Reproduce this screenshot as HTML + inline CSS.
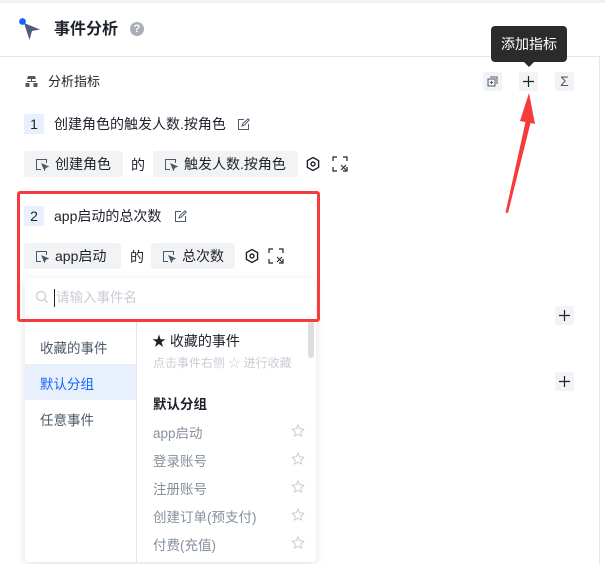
<!DOCTYPE html>
<html><head><meta charset="utf-8"><style>
*{box-sizing:border-box;margin:0;padding:0}
body{width:605px;height:564px;overflow:hidden;background:#fff;font-family:"Liberation Sans","Noto Sans CJK SC",sans-serif;color:#1d2129;position:relative}
.a{position:absolute;white-space:nowrap}
.btn{position:absolute;width:19px;height:19px;background:#f2f3f5;border-radius:2px;color:#4e5969;font-size:15px;line-height:19px;text-align:center}
.btn svg{display:block}
.badge{position:absolute;width:20px;height:20px;background:#e8f0fe;font-size:14px;line-height:20px;text-align:center;color:#1d2129}
.chip{position:absolute;height:26px;background:#f2f3f5;border-radius:3px;font-size:14px;line-height:26px;padding-left:31px;color:#1d2129}
.chip svg{position:absolute;left:11px;top:7px}
.it{position:absolute;left:153px;font-size:13.5px;color:#86909c}
.st{position:absolute;left:291px}
</style></head><body>
<div class="a" style="left:0;top:0;width:605px;height:3px;background:#f0f1f4"></div>
<svg class="a" style="left:17px;top:16px" width="26" height="26" viewBox="0 0 26 26"><path d="M7 7 L23 13.5 L15 15 L12.5 24 Z" fill="#4e5c7e"/><circle cx="5.5" cy="5.5" r="3.4" fill="#1664ff"/></svg>
<div class="a" style="left:54px;top:19px;font-size:16px;font-weight:bold;line-height:22px">事件分析</div>
<div class="a" style="left:130px;top:22px;width:14px;height:14px;border-radius:50%;background:#a9aeb8;color:#fff;font-size:11px;font-weight:bold;line-height:14px;text-align:center">?</div>
<div class="a" style="left:0;top:56px;width:600px;height:1px;background:#e5e6eb"></div>
<div class="a" style="left:599px;top:56px;width:1px;height:508px;background:#e5e6eb"></div>
<svg class="a" style="left:25px;top:75px" width="13" height="13" viewBox="0 0 13 13" fill="#4e5969"><path d="M3 1h7l1 3H2z"/><rect x="6" y="4" width="1" height="3"/><rect x="2" y="6" width="9" height="1"/><rect x="0.5" y="8" width="4" height="4"/><rect x="8.5" y="8" width="4" height="4"/></svg>
<div class="a" style="left:48px;top:73px;font-size:13px;line-height:18px">分析指标</div>
<div class="btn" style="left:483px;top:72px"><svg width="19" height="19" viewBox="0 0 19 19" fill="none" stroke="#4e5969" stroke-width="1"><rect x="5" y="7" width="7" height="7"/><path d="M7 5h7v7"/><path d="M8.5 9v3M7 10.5h3"/></svg></div>
<div class="btn" style="left:519px;top:72px"><svg width="19" height="19" viewBox="0 0 19 19" stroke="#1d2129" stroke-width="1.2"><path d="M9.5 4v11M4 9.5h11"/></svg></div>
<div class="btn" style="left:555px;top:72px;font-size:14px">Σ</div>
<div class="a" style="left:491px;top:26px;width:76px;height:36px;background:#2b2b2b;border-radius:4px;color:#fff;font-size:14px;line-height:36px;text-align:center">添加指标</div>
<div class="a" style="left:523px;top:61px;width:0;height:0;border-left:6px solid transparent;border-right:6px solid transparent;border-top:6px solid #2b2b2b"></div>
<div class="badge" style="left:24px;top:114px">1</div>
<div class="a" style="left:54px;top:115px;font-size:14px;line-height:18px">创建角色的触发人数.按角色</div>
<svg class="a" style="left:237px;top:118px" width="13" height="13" viewBox="0 0 13 13" fill="none" stroke="#4e5969"><path d="M7 1.5H1.5v10h10V6"/><path d="M5 8l1-2.5L11 .8l1.2 1.2L7.5 7z"/></svg>
<div class="chip" style="left:24px;top:151px;width:99px"><svg width="14" height="13" viewBox="0 0 14 13" fill="none" stroke="#4e5969"><path d="M6 11.5H1.5v-10h10V5"/><path d="M7 6l6 2.5-2.5 1-1 2.5z" fill="#4e5969"/></svg>创建角色</div>
<div class="a" style="left:131px;top:155px;font-size:14px">的</div>
<div class="chip" style="left:153px;top:151px;width:145px"><svg width="14" height="13" viewBox="0 0 14 13" fill="none" stroke="#4e5969"><path d="M6 11.5H1.5v-10h10V5"/><path d="M7 6l6 2.5-2.5 1-1 2.5z" fill="#4e5969"/></svg>触发人数.按角色</div>
<svg class="a" style="left:305px;top:156px" width="16" height="16" viewBox="0 0 16 16" fill="none" stroke="#1d2129" stroke-width="1.4"><path d="M8 1.5l5.6 3.2v6.6L8 14.5l-5.6-3.2V4.7z"/><circle cx="8" cy="8" r="2"/></svg>
<svg class="a" style="left:332px;top:156px" width="16" height="16" viewBox="0 0 16 16" fill="none" stroke="#1d2129" stroke-width="1.2"><path d="M1 5V1h4M11 1h4v4M1 11v4h4M15 11v4h-4"/><path d="M9 9l5 5M14 9l-5 5" stroke-width="1"/></svg>
<div class="badge" style="left:24px;top:206px">2</div>
<div class="a" style="left:54px;top:207px;font-size:14px;line-height:18px">app启动的总次数</div>
<svg class="a" style="left:174px;top:210px" width="13" height="13" viewBox="0 0 13 13" fill="none" stroke="#4e5969"><path d="M7 1.5H1.5v10h10V6"/><path d="M5 8l1-2.5L11 .8l1.2 1.2L7.5 7z"/></svg>
<div class="chip" style="left:24px;top:243px;width:97px"><svg width="14" height="13" viewBox="0 0 14 13" fill="none" stroke="#4e5969"><path d="M6 11.5H1.5v-10h10V5"/><path d="M7 6l6 2.5-2.5 1-1 2.5z" fill="#4e5969"/></svg>app启动</div>
<div class="a" style="left:130px;top:247px;font-size:14px">的</div>
<div class="chip" style="left:151px;top:243px;width:84px"><svg width="14" height="13" viewBox="0 0 14 13" fill="none" stroke="#4e5969"><path d="M6 11.5H1.5v-10h10V5"/><path d="M7 6l6 2.5-2.5 1-1 2.5z" fill="#4e5969"/></svg>总次数</div>
<svg class="a" style="left:244px;top:248px" width="16" height="16" viewBox="0 0 16 16" fill="none" stroke="#1d2129" stroke-width="1.4"><path d="M8 1.5l5.6 3.2v6.6L8 14.5l-5.6-3.2V4.7z"/><circle cx="8" cy="8" r="2"/></svg>
<svg class="a" style="left:268px;top:248px" width="16" height="16" viewBox="0 0 16 16" fill="none" stroke="#1d2129" stroke-width="1.2"><path d="M1 5V1h4M11 1h4v4M1 11v4h4M15 11v4h-4"/><path d="M9 9l5 5M14 9l-5 5" stroke-width="1"/></svg>
<div class="a" style="left:25px;top:278px;width:291px;height:284px;background:#fff;border-radius:4px;box-shadow:0 2px 10px rgba(0,0,0,.12)"></div>
<div class="a" style="left:136px;top:320px;width:1px;height:242px;background:#e5e6eb"></div>
<svg class="a" style="left:35px;top:290px" width="14" height="14" viewBox="0 0 14 14" fill="none" stroke="#c9cdd4" stroke-width="1.3"><circle cx="6" cy="6" r="4.5"/><path d="M9.5 9.5l3 3"/></svg>
<div class="a" style="left:54px;top:289px;width:1px;height:18px;background:#1d2129"></div>
<div class="a" style="left:56px;top:289px;font-size:13.5px;line-height:18px;color:#c9cdd4">请输入事件名</div>
<div class="a" style="left:40px;top:337px;font-size:13.5px;color:#4e5969">收藏的事件</div>
<div class="a" style="left:25px;top:364px;width:111px;height:36px;background:#e8f0fc"></div>
<div class="a" style="left:40px;top:373px;font-size:13.5px;color:#1664ff">默认分组</div>
<div class="a" style="left:40px;top:409px;font-size:13.5px;color:#4e5969">任意事件</div>
<div class="a" style="left:308px;top:321px;width:6px;height:37px;background:#dcdde0;border-radius:3px"></div>
<div class="a" style="left:152px;top:331px;font-size:14px;color:#1d2129">★ 收藏的事件</div>
<div class="a" style="left:153px;top:354px;font-size:12px;color:#c9cdd4">点击事件右侧 ☆ 进行收藏</div>
<div class="a" style="left:153px;top:393px;font-size:13.5px;font-weight:bold;color:#1d2129">默认分组</div>
<div class="it" style="top:422px">app启动</div>
<div class="it" style="top:450px">登录账号</div>
<div class="it" style="top:478px">注册账号</div>
<div class="it" style="top:506px">创建订单(预支付)</div>
<div class="it" style="top:534px">付费(充值)</div>
<svg class="st" style="top:424px" width="14" height="14" viewBox="0 0 14 14"><path d="M7 1l1.8 3.8 4 .5-3 2.8.8 4L7 10.2 3.4 12.1l.8-4-3-2.8 4-.5z" fill="none" stroke="#c9cdd4"/></svg>
<svg class="st" style="top:452px" width="14" height="14" viewBox="0 0 14 14"><path d="M7 1l1.8 3.8 4 .5-3 2.8.8 4L7 10.2 3.4 12.1l.8-4-3-2.8 4-.5z" fill="none" stroke="#c9cdd4"/></svg>
<svg class="st" style="top:480px" width="14" height="14" viewBox="0 0 14 14"><path d="M7 1l1.8 3.8 4 .5-3 2.8.8 4L7 10.2 3.4 12.1l.8-4-3-2.8 4-.5z" fill="none" stroke="#c9cdd4"/></svg>
<svg class="st" style="top:508px" width="14" height="14" viewBox="0 0 14 14"><path d="M7 1l1.8 3.8 4 .5-3 2.8.8 4L7 10.2 3.4 12.1l.8-4-3-2.8 4-.5z" fill="none" stroke="#c9cdd4"/></svg>
<svg class="st" style="top:536px" width="14" height="14" viewBox="0 0 14 14"><path d="M7 1l1.8 3.8 4 .5-3 2.8.8 4L7 10.2 3.4 12.1l.8-4-3-2.8 4-.5z" fill="none" stroke="#c9cdd4"/></svg>
<div class="a" style="left:17px;top:191px;width:303px;height:131px;border:3px solid #f53b3b;border-radius:3px"></div>
<div class="btn" style="left:555px;top:306px"><svg width="19" height="19" viewBox="0 0 19 19" stroke="#1d2129" stroke-width="1.2"><path d="M9.5 4v11M4 9.5h11"/></svg></div>
<div class="btn" style="left:555px;top:372px"><svg width="19" height="19" viewBox="0 0 19 19" stroke="#1d2129" stroke-width="1.2"><path d="M9.5 4v11M4 9.5h11"/></svg></div>
<svg class="a" style="left:495px;top:85px" width="50" height="135" viewBox="0 0 50 135"><path d="M34 8 L40 39 L35.5 38 L13 128 L10.5 127.5 L30.5 37 L25 36 Z" fill="#f53b3b"/></svg>
</body></html>
